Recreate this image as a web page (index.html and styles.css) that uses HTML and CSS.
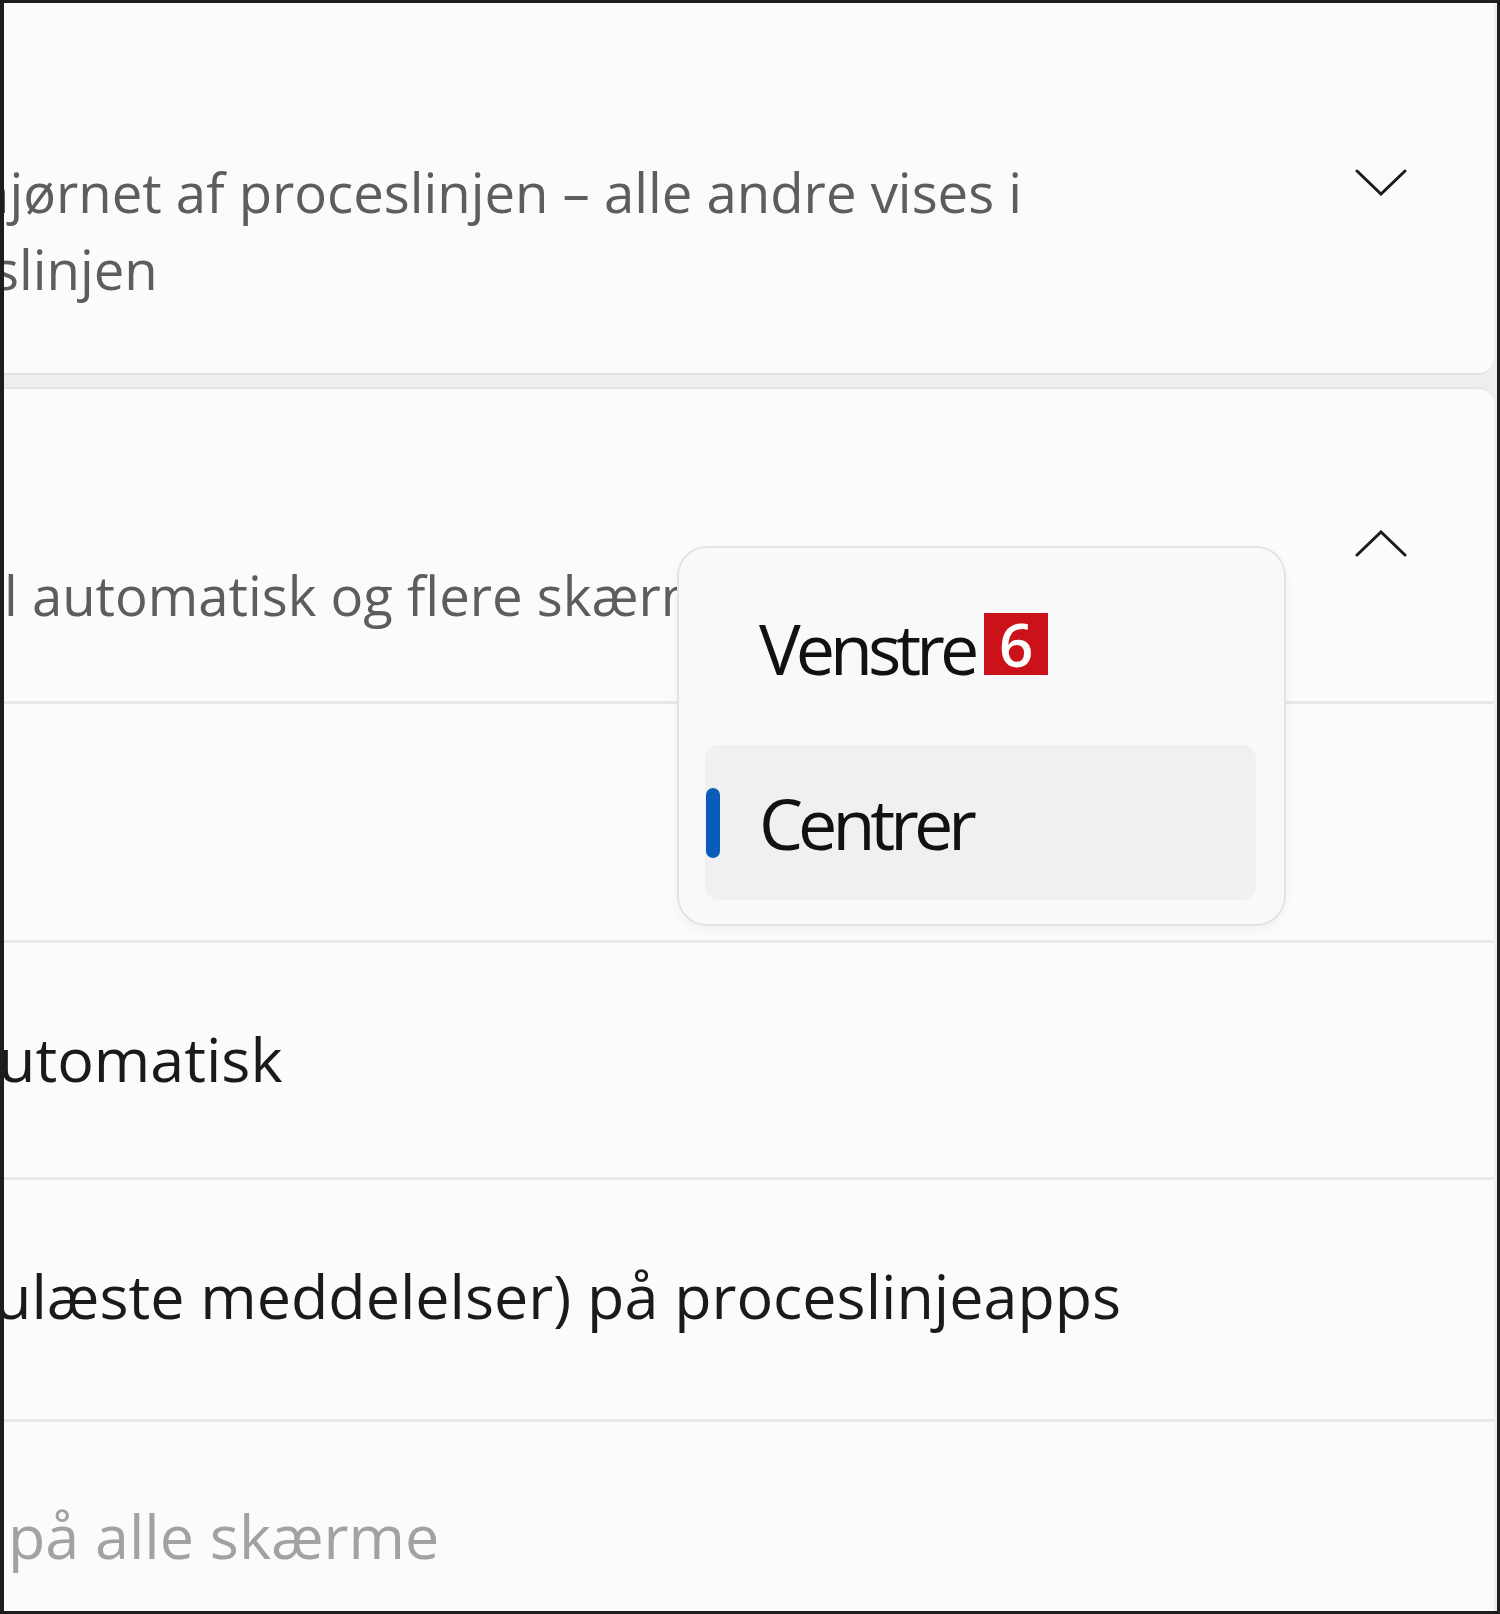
FILE: index.html
```html
<!DOCTYPE html>
<html lang="da">
<head>
<meta charset="utf-8">
<title>Proceslinje</title>
<link rel="stylesheet" href="styles.css">
</head>
<body>
<div class="frame">
  <section class="card card-top">
    <div class="head head-top">
      <p class="desc">
        <span class="line cut-h">hjørnet af proceslinjen – alle andre vises i</span>
        <span class="line cut-s">slinjen</span>
      </p>
      <svg class="chev chev-down" viewBox="0 0 52 28" aria-hidden="true"><polyline points="2,3 26,26 50,3"/></svg>
    </div>
  </section>
  <section class="card card-main">
    <div class="head head-main">
      <p class="desc desc-main"><span class="line">l automatisk og flere skærme</span></p>
      <svg class="chev chev-up" viewBox="0 0 52 28" aria-hidden="true"><polyline points="2,25 26,2 50,25"/></svg>
    </div>
    <div class="row row-align"></div>
    <div class="row row-auto"><span class="title cut-u">utomatisk</span></div>
    <div class="row row-badge"><span class="title cut-u2">ulæste meddelelser) på proceslinjeapps</span></div>
    <div class="row row-all"><span class="title disabled">på alle skærme</span></div>
  </section>
  <div class="popup" role="listbox">
    <div class="item" role="option"><span class="item-text">Venstre</span><span class="marker">6</span></div>
    <div class="item selected" role="option" aria-selected="true"><span class="pill"></span><span class="item-text">Centrer</span></div>
  </div>
</div>
</body>
</html>
```

FILE: styles.css
```css
* { box-sizing: border-box; }
html, body { margin: 0; padding: 0; }
body {
  background: #fbfbfb;
  font-family: "Open Sans", "Noto Sans", sans-serif;
}
.frame {
  position: relative;
  width: 1500px;
  height: 1614px;
  border: 3px solid #1d1d1d;
  border-left-width: 4px;
  background: #eeeeee;
  overflow: hidden;
  display: flex;
  flex-direction: column;
  gap: 12px;
}
.card {
  background: #fbfbfb;
  margin-right: 3px;
}
.card-top {
  height: 372px;
  flex: none;
  border-bottom: 2px solid #e3e3e3;
  border-bottom-right-radius: 16px;
}
.card-main {
  flex: 1;
  border-top: 2px solid #e6e6e6;
  border-top-right-radius: 16px;
}
.head {
  display: flex;
  align-items: flex-start;
  padding-right: 87px;
}
.head-top { padding-top: 151px; }
.head-main { height: 312px; padding-top: 141px; }
.desc {
  flex: 1;
  margin: 0;
  font-size: 54.5px;
  line-height: 77px;
  color: #5d5d5d;
  white-space: nowrap;
}
.desc-main { margin-top: 27px; }
.line { display: block; }
.cut-h { margin-left: -28px; }
.cut-s { margin-left: -11px; }
.chev {
  width: 52px;
  height: 28px;
  flex: none;
  fill: none;
  stroke: #1b1b1b;
  stroke-width: 3;
  stroke-linecap: round;
  stroke-linejoin: miter;
}
.chev-down { margin-top: 14px; }
.row {
  border-top: 3px solid #e8e8e8;
}
.row-align { height: 239px; }
.row-auto { height: 237px; padding-top: 76px; }
.row-badge { height: 242px; padding-top: 76px; }
.row-all { padding-top: 74px; flex: 1; }
.title {
  display: block;
  font-size: 61px;
  line-height: 80px;
  color: #1a1a1a;
  white-space: nowrap;
}
.cut-u { margin-left: -6px; }
.cut-u2 { margin-left: -10px; }
.disabled { color: #a2a2a2; margin-left: 4px; }

.popup {
  position: absolute;
  left: 673px;
  top: 543px;
  width: 609px;
  height: 380px;
  padding: 22px 28px 24px 26px;
  background: #f9f9f9;
  border: 2px solid #e4e4e4;
  border-radius: 30px;
  box-shadow: 0 4px 10px rgba(0,0,0,0.04);
  display: flex;
  flex-direction: column;
  gap: 20px;
}
.item {
  position: relative;
  height: 155px;
  display: flex;
  align-items: center;
  padding-left: 54px;
  border-radius: 14px;
}
.item.selected { background: #f0f0f0; }
.item-text {
  font-size: 70px;
  line-height: 100px;
  letter-spacing: -5px;
  color: #111111;
}
.marker {
  align-self: flex-start;
  margin-top: 43px;
  margin-left: 10px;
  width: 64px;
  height: 62px;
  background: #cc1219;
  color: #ffffff;
  font-size: 60px;
  font-weight: 600;
  line-height: 62px;
  text-align: center;
}
.pill {
  position: absolute;
  left: 1px;
  top: 43px;
  width: 14px;
  height: 70px;
  border-radius: 7px;
  background: #0b5cba;
}
```
